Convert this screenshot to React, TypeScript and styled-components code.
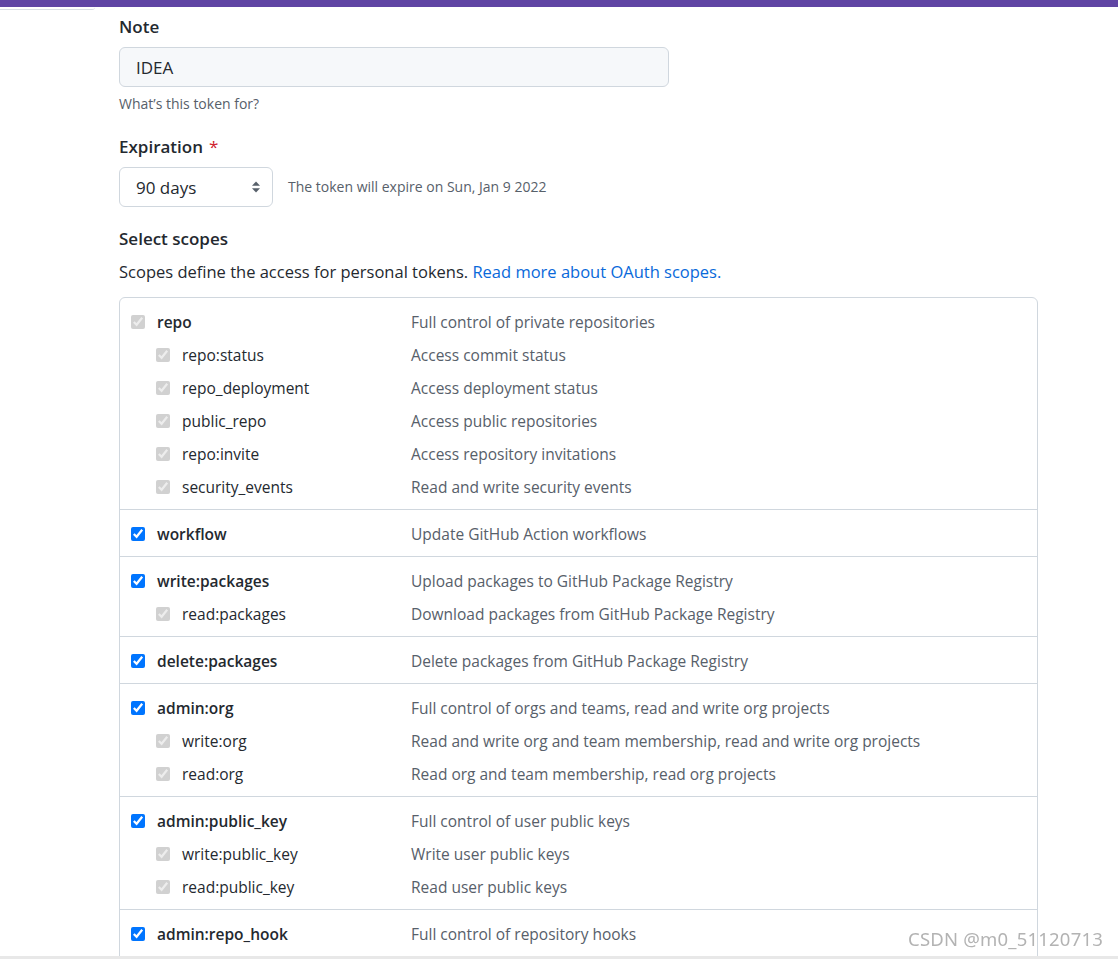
import React from "react";
import styled, { createGlobalStyle } from "styled-components";

const Global = createGlobalStyle`
  html, body { margin: 0; padding: 0; background: #fff; overflow: hidden; }
  body { font-family: "Open Sans", "Noto Sans", Arial, sans-serif; color: #24292f; height: 959px; }
`;

const TopBar = styled.div`
  height: 7px;
  background: #6045a4;
`;

const TabLine = styled.div`
  width: 95px;
  height: 2px;
  border-bottom: 1px solid #d8dee4;
  border-bottom-right-radius: 6px;
`;

const Content = styled.div`
  margin-left: 119px;
  width: 919px;
`;

const Label = styled.div<{ $mt: number }>`
  margin-top: ${(p) => p.$mt}px;
  font-size: 17px;
  font-weight: 600;
  line-height: 24px;
  color: #24292f;
`;

const Required = styled.span`
  color: #cf222e;
  margin-left: 6px;
  font-weight: 400;
`;

const TextInput = styled.div`
  margin-top: 8px;
  box-sizing: border-box;
  width: 550px;
  height: 40px;
  border: 1px solid #d0d7de;
  border-radius: 6px;
  background: #f6f8fa;
  display: flex;
  align-items: center;
  padding-left: 16px;
  font-size: 17px;
  color: #24292f;
`;

const Note = styled.div`
  margin-top: 7px;
  font-size: 14px;
  line-height: 20px;
  color: #57606a;
`;

const ExpRow = styled.div`
  margin-top: 8px;
  display: flex;
  align-items: center;
  gap: 15px;
`;

const Select = styled.div`
  box-sizing: border-box;
  width: 154px;
  height: 40px;
  border: 1px solid #d0d7de;
  border-radius: 6px;
  background: #fff;
  display: flex;
  align-items: center;
  justify-content: space-between;
  padding: 0 10px 0 16px;
  font-size: 17px;
  color: #24292f;
`;

const ExpNote = styled.span`
  font-size: 14px;
  color: #57606a;
  margin-top: -2px;
`;

const Lead = styled.div`
  margin-top: 9px;
  font-size: 16.5px;
  line-height: 24px;
  color: #24292f;
`;

const Link = styled.a`
  color: #0969da;
  text-decoration: none;
`;

const Table = styled.div`
  margin-top: 13px;
  border: 1px solid #d0d7de;
  border-radius: 6px;
`;

const Group = styled.div`
  padding: 7px 0 6px;
  & + & {
    border-top: 1px solid #d0d7de;
  }
`;

const Row = styled.div`
  display: grid;
  grid-template-columns: 291px 1fr;
  height: 33px;
  align-items: center;
  font-size: 15.5px;
`;

const NameCell = styled.label<{ $child: boolean }>`
  display: flex;
  align-items: center;
  padding-left: ${(p) => (p.$child ? 36 : 11)}px;
  font-weight: ${(p) => (p.$child ? 400 : 600)};
  color: #24292f;
`;

const Check = styled.input`
  width: 14px;
  height: 14px;
  margin: 0 12px 0 0;
  flex: none;
`;

const Desc = styled.div`
  color: #57606a;
`;

const Watermark = styled.div`
  position: fixed;
  right: 15px;
  top: 926px;
  font-family: "Noto Sans", "Open Sans", sans-serif;
  font-size: 18.5px;
  color: #b3b3b3;
  letter-spacing: 0.2px;
`;

const BottomStrip = styled.div`
  position: fixed;
  left: 0;
  right: 0;
  bottom: 0;
  height: 3px;
  background: #e8e8e8;
`;

type Scope = { name: string; desc: string; children?: { name: string; desc: string }[] };

const scopes: Scope[] = [
  {
    name: "repo",
    desc: "Full control of private repositories",
    children: [
      { name: "repo:status", desc: "Access commit status" },
      { name: "repo_deployment", desc: "Access deployment status" },
      { name: "public_repo", desc: "Access public repositories" },
      { name: "repo:invite", desc: "Access repository invitations" },
      { name: "security_events", desc: "Read and write security events" },
    ],
  },
  { name: "workflow", desc: "Update GitHub Action workflows" },
  {
    name: "write:packages",
    desc: "Upload packages to GitHub Package Registry",
    children: [{ name: "read:packages", desc: "Download packages from GitHub Package Registry" }],
  },
  { name: "delete:packages", desc: "Delete packages from GitHub Package Registry" },
  {
    name: "admin:org",
    desc: "Full control of orgs and teams, read and write org projects",
    children: [
      { name: "write:org", desc: "Read and write org and team membership, read and write org projects" },
      { name: "read:org", desc: "Read org and team membership, read org projects" },
    ],
  },
  {
    name: "admin:public_key",
    desc: "Full control of user public keys",
    children: [
      { name: "write:public_key", desc: "Write user public keys" },
      { name: "read:public_key", desc: "Read user public keys" },
    ],
  },
  {
    name: "admin:repo_hook",
    desc: "Full control of repository hooks",
    children: [
      { name: "write:repo_hook", desc: "Write repository hooks" },
      { name: "read:repo_hook", desc: "Read repository hooks" },
    ],
  },
];

const SelectArrows = () => (
  <svg width="12" height="14" viewBox="0 0 12 14" aria-hidden="true">
    <path d="M6 1.5 L10 5.8 H2 Z" fill="#57606a" />
    <path d="M6 12.5 L10 8.2 H2 Z" fill="#57606a" />
  </svg>
);

export default function App() {
  return (
    <>
      <Global />
      <TopBar />
      <TabLine />
      <Content>
        <Label $mt={5}>Note</Label>
        <TextInput>IDEA</TextInput>
        <Note>What’s this token for?</Note>
        <Label $mt={21}>
          Expiration<Required>*</Required>
        </Label>
        <ExpRow>
          <Select>
            <span>90 days</span>
            <SelectArrows />
          </Select>
          <ExpNote>The token will expire on Sun, Jan 9 2022</ExpNote>
        </ExpRow>
        <Label $mt={20}>Select scopes</Label>
        <Lead>
          Scopes define the access for personal tokens. <Link href="#">Read more about OAuth scopes.</Link>
        </Lead>
        <Table>
          {scopes.map((s) => (
            <Group key={s.name}>
              <Row>
                <NameCell $child={false}>
                  <Check type="checkbox" checked disabled={s.name === "repo"} readOnly />
                  {s.name}
                </NameCell>
                <Desc>{s.desc}</Desc>
              </Row>
              {s.children?.map((c) => (
                <Row key={c.name}>
                  <NameCell $child>
                    <Check type="checkbox" checked disabled readOnly />
                    {c.name}
                  </NameCell>
                  <Desc>{c.desc}</Desc>
                </Row>
              ))}
            </Group>
          ))}
        </Table>
      </Content>
      <Watermark>CSDN @m0_51120713</Watermark>
      <BottomStrip />
    </>
  );
}
